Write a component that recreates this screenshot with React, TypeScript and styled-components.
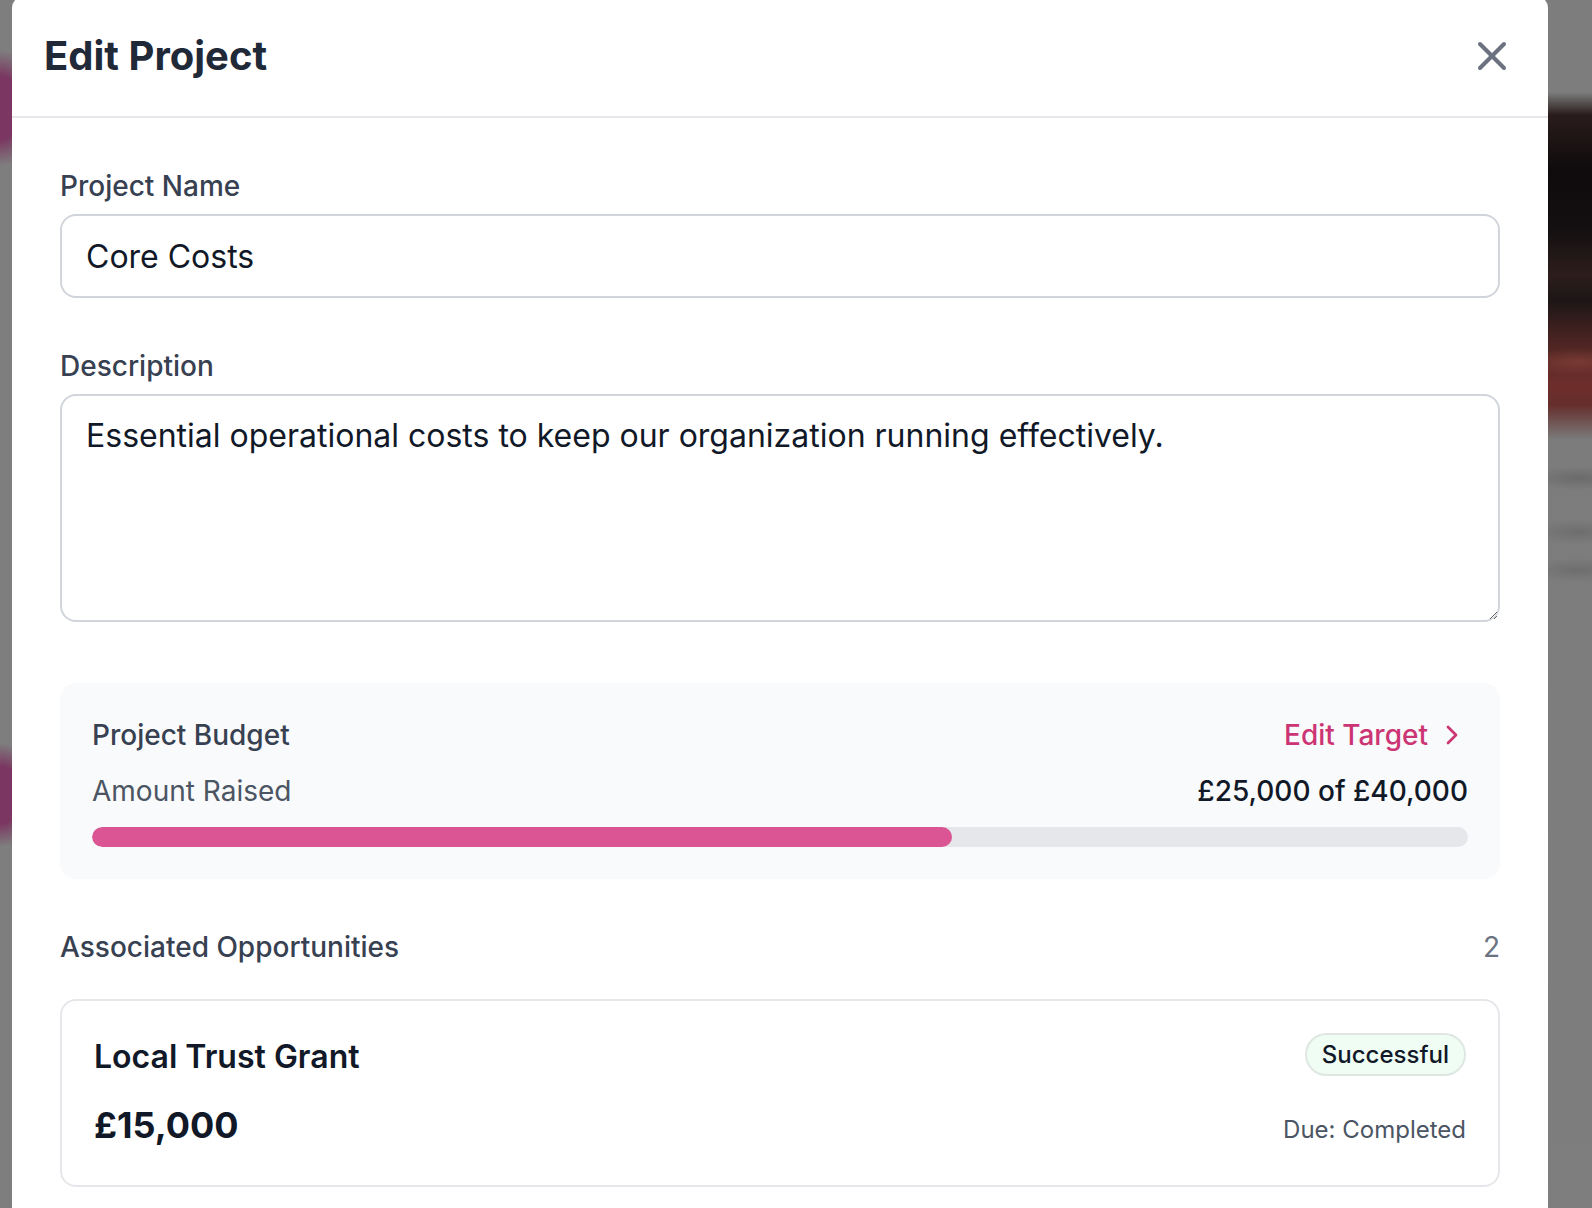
import React from 'react';
import styled, { createGlobalStyle } from 'styled-components';
import { X, ChevronRight } from 'lucide-react';

const GlobalStyle = createGlobalStyle`
  html, body {
    margin: 0;
    padding: 0;
    height: 100%;
    overflow: hidden;
  }
  body {
    font-family: Inter, "Noto Sans", "Liberation Sans", sans-serif;
    background: #7f7f7f;
    -webkit-font-smoothing: antialiased;
  }
  * { box-sizing: border-box; }
`;

const Backdrop = styled.div`
  display: flex;
  align-items: flex-start;
  width: 100vw;
  height: 100vh;
  overflow: hidden;
  background: #7f7f7f;
`;

const LeftGlimpse = styled.div`
  flex: 0 0 12px;
  align-self: stretch;
  background:
    radial-gradient(ellipse 40px 58px at 0px 108px, #7b3761 0%, #7b3761 55%, rgba(123, 55, 97, 0) 100%),
    radial-gradient(ellipse 40px 52px at 0px 795px, #7b3761 0%, #7b3761 55%, rgba(123, 55, 97, 0) 100%),
    #7e7e7e;
`;

const RightGlimpse = styled.div`
  flex: 1 1 auto;
  align-self: stretch;
  background:
    radial-gradient(ellipse 60px 14px at 30px 362px, rgba(140, 70, 60, 0.6), rgba(140, 70, 60, 0)),
    radial-gradient(ellipse 50px 12px at 30px 478px, rgba(95, 95, 95, 0.6), rgba(95, 95, 95, 0)),
    radial-gradient(ellipse 50px 12px at 30px 532px, rgba(100, 100, 100, 0.6), rgba(100, 100, 100, 0)),
    radial-gradient(ellipse 50px 12px at 30px 570px, rgba(100, 100, 100, 0.6), rgba(100, 100, 100, 0)),
    linear-gradient(
      to bottom,
      #7d7d7d 0px,
      #7d7d7d 92px,
      #2a1c1c 115px,
      #0f0b0c 170px,
      #141011 230px,
      #2d1d1c 275px,
      #1c1616 300px,
      #4a2422 340px,
      #6e2e2b 385px,
      #652e2c 405px,
      #7c7c7c 440px,
      #7e7e7e 100%
    );
`;

const Modal = styled.div`
  flex: 0 0 1536px;
  width: 1536px;
  margin-top: -4px;
  background: #ffffff;
  border-radius: 12px;
  overflow: hidden;
`;

const Header = styled.header`
  display: flex;
  align-items: center;
  justify-content: space-between;
  padding: 32px;
  border-bottom: 2px solid #e5e7eb;
`;

const Title = styled.h2`
  margin: 0;
  font-size: 40px;
  line-height: 56px;
  font-weight: 700;
  color: #1f2937;
`;

const CloseButton = styled.button`
  display: flex;
  align-items: center;
  justify-content: center;
  width: 48px;
  height: 48px;
  padding: 0;
  border: 0;
  background: none;
  color: #6b7280;
  cursor: pointer;
`;

const Body = styled.div`
  display: flex;
  flex-direction: column;
  gap: 48px;
  padding: 48px;
`;

const Field = styled.div`
  display: flex;
  flex-direction: column;
`;

const Label = styled.label`
  display: block;
  margin-bottom: 8px;
  font-size: 28px;
  line-height: 40px;
  font-weight: 500;
  color: #374151;
`;

const TextInput = styled.input`
  width: 100%;
  height: 84px;
  padding: 0 24px;
  border: 2px solid #d1d5db;
  border-radius: 16px;
  font-family: inherit;
  font-size: 32px;
  color: #111827;
  background: #ffffff;
  outline: none;
`;

const TextArea = styled.textarea`
  display: block;
  width: 100%;
  height: 228px;
  margin-bottom: 13px;
  padding: 16px 24px;
  border: 2px solid #d1d5db;
  border-radius: 16px;
  font-family: inherit;
  font-size: 32px;
  line-height: 48px;
  color: #111827;
  background: #ffffff;
  outline: none;
`;

const BudgetBox = styled.section`
  padding: 32px;
  border-radius: 16px;
  background: #f9fafb;
`;

const SpreadRow = styled.div<{ $gap?: number }>`
  display: flex;
  align-items: center;
  justify-content: space-between;
  margin-bottom: ${(p) => p.$gap ?? 16}px;
`;

const Text = styled.span<{ $size?: number; $line?: number; $weight?: number; $color?: string }>`
  font-size: ${(p) => p.$size ?? 28}px;
  line-height: ${(p) => p.$line ?? 40}px;
  font-weight: ${(p) => p.$weight ?? 400};
  color: ${(p) => p.$color ?? '#374151'};
`;

const EditTarget = styled.button`
  display: inline-flex;
  align-items: center;
  gap: 8px;
  padding: 0;
  border: 0;
  background: none;
  font-family: inherit;
  font-size: 28px;
  line-height: 40px;
  font-weight: 500;
  color: #cc3574;
  cursor: pointer;
`;

const Track = styled.div`
  height: 20px;
  border-radius: 9999px;
  background: #e5e7eb;
  overflow: hidden;
`;

const Fill = styled.div`
  height: 100%;
  border-radius: 9999px;
  background: #db5594;
`;

const SectionHead = styled.div`
  display: flex;
  align-items: center;
  justify-content: space-between;
  margin-bottom: 32px;
`;

const Card = styled.article`
  padding: 32px;
  border: 2px solid #e5e7eb;
  border-radius: 16px;
  background: #ffffff;
`;

const CardTop = styled.div`
  display: flex;
  align-items: flex-start;
  justify-content: space-between;
  margin-bottom: 16px;
`;

const CardBottom = styled.div`
  display: flex;
  align-items: baseline;
  justify-content: space-between;
`;

const Badge = styled.span`
  display: inline-flex;
  align-items: center;
  padding: 4px 15px;
  border: 2px solid #dfe7e2;
  border-radius: 9999px;
  background: #f0fdf4;
  font-size: 24px;
  line-height: 31px;
  font-weight: 500;
  color: #111827;
`;

const raised = 25000;
const target = 40000;

export default function App() {
  const pct = (raised / target) * 100;
  return (
    <>
      <GlobalStyle />
      <Backdrop>
        <LeftGlimpse />
        <Modal>
          <Header>
            <Title>Edit Project</Title>
            <CloseButton aria-label="Close">
              <X size={48} strokeWidth={2} />
            </CloseButton>
          </Header>
          <Body>
            <Field>
              <Label htmlFor="pname">Project Name</Label>
              <TextInput id="pname" defaultValue="Core Costs" />
            </Field>
            <Field>
              <Label htmlFor="pdesc">Description</Label>
              <TextArea
                id="pdesc"
                defaultValue="Essential operational costs to keep our organization running effectively."
              />
            </Field>
            <BudgetBox>
              <SpreadRow>
                <Text $weight={500} $color="#374151">Project Budget</Text>
                <EditTarget>
                  Edit Target
                  <ChevronRight size={32} strokeWidth={2} />
                </EditTarget>
              </SpreadRow>
              <SpreadRow>
                <Text $color="#4b5563">Amount Raised</Text>
                <Text $weight={500} $color="#111827">£25,000 of £40,000</Text>
              </SpreadRow>
              <Track>
                <Fill style={{ width: `${pct}%` }} />
              </Track>
            </BudgetBox>
            <div>
              <SectionHead>
                <Text $weight={500} $color="#374151">Associated Opportunities</Text>
                <Text $color="#6b7280">2</Text>
              </SectionHead>
              <Card>
                <CardTop>
                  <Text $size={32} $line={48} $weight={600} $color="#111827">Local Trust Grant</Text>
                  <Badge>Successful</Badge>
                </CardTop>
                <CardBottom>
                  <Text $size={36} $line={56} $weight={700} $color="#111827">£15,000</Text>
                  <Text $size={24} $line={32} $color="#4b5563">Due: Completed</Text>
                </CardBottom>
              </Card>
            </div>
          </Body>
        </Modal>
        <RightGlimpse />
      </Backdrop>
    </>
  );
}
